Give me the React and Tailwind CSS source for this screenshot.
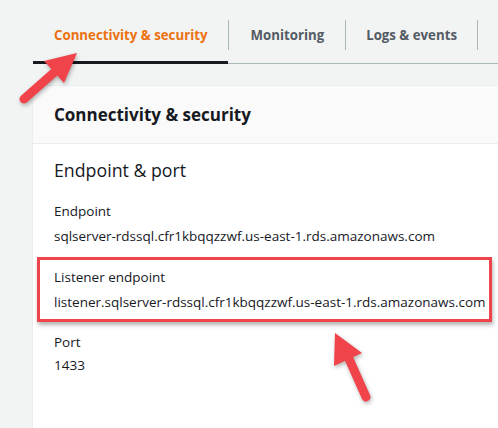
import React from "react";

const font = { fontFamily: '"Open Sans", "Noto Sans", Arial, sans-serif' };

export default function App() {
  return (
    <div className="relative w-[498px] h-[428px] overflow-hidden bg-[#f2f3f3] text-[#16191f]" style={font}>
      {/* Tabs */}
      <div className="ml-[33px] h-[64px] pt-[20px] flex items-start border-b border-[#aab7b8]">
        <div className="h-[44px] pb-[11px] px-[21px] border-b-[3px] border-[#16191f]">
          <div className="h-[31px] flex items-center text-[13.25px] font-bold text-[#ec7211] whitespace-nowrap">
            Connectivity &amp; security
          </div>
        </div>
        <div className="w-px h-[30px] bg-[#aab7b8]" />
        <div className="h-[31px] px-[21px] flex items-center text-[13.25px] font-bold text-[#545b64] whitespace-nowrap">Monitoring</div>
        <div className="w-px h-[30px] bg-[#aab7b8]" />
        <div className="h-[31px] px-[20px] flex items-center text-[13.25px] font-bold text-[#545b64] whitespace-nowrap">Logs &amp; events</div>
        <div className="w-px h-[30px] bg-[#aab7b8]" />
      </div>

      {/* Panel */}
      <div className="ml-[32px] mt-[21px] bg-white border-l border-t border-[#eaeded] h-[400px]">
        <div className="h-[58px] flex items-center pl-[21px] border-b border-[#eaeded] bg-[#fafafa]">
          <span className="text-[17px] font-bold whitespace-nowrap">Connectivity &amp; security</span>
        </div>
        <div className="pl-[21px] pt-[14px] whitespace-nowrap">
          <div className="text-[17.75px] leading-[24px]">Endpoint &amp; port</div>
          <div className="mt-[19px] text-[13.5px] leading-[20px]">Endpoint</div>
          <div className="mt-[5px] text-[13.5px] leading-[20px]">sqlserver-rdssql.cfr1kbqqzzwf.us-east-1.rds.amazonaws.com</div>
          <div className="mt-[21px] text-[13.5px] leading-[20px]">Listener endpoint</div>
          <div className="mt-[5px] text-[13.5px] leading-[20px]">listener.sqlserver-rdssql.cfr1kbqqzzwf.us-east-1.rds.amazonaws.com</div>
          <div className="mt-[20px] text-[13.5px] leading-[20px]">Port</div>
          <div className="mt-[3px] text-[13.5px] leading-[20px]">1433</div>
        </div>
      </div>

      {/* Annotation box */}
      <div className="absolute left-[37px] top-[257px] w-[455px] h-[65px] border-[3px] border-[#f0434a] shadow-[1px_3px_4px_rgba(0,0,0,0.3)]" />

      {/* Arrows */}
      <svg className="absolute left-0 top-0" width="498" height="428" style={{ filter: "drop-shadow(1px 2px 2px rgba(0,0,0,0.3))" }}>
        <line x1="24" y1="99" x2="58" y2="69" stroke="#f0434a" strokeWidth="9" strokeLinecap="round" />
        <polygon points="77,53 44,61 64,83" fill="#f0434a" />
        <line x1="366" y1="397" x2="346" y2="352" stroke="#f0434a" strokeWidth="9" strokeLinecap="round" />
        <polygon points="335,333 334,366 362,353" fill="#f0434a" />
      </svg>
    </div>
  );
}
